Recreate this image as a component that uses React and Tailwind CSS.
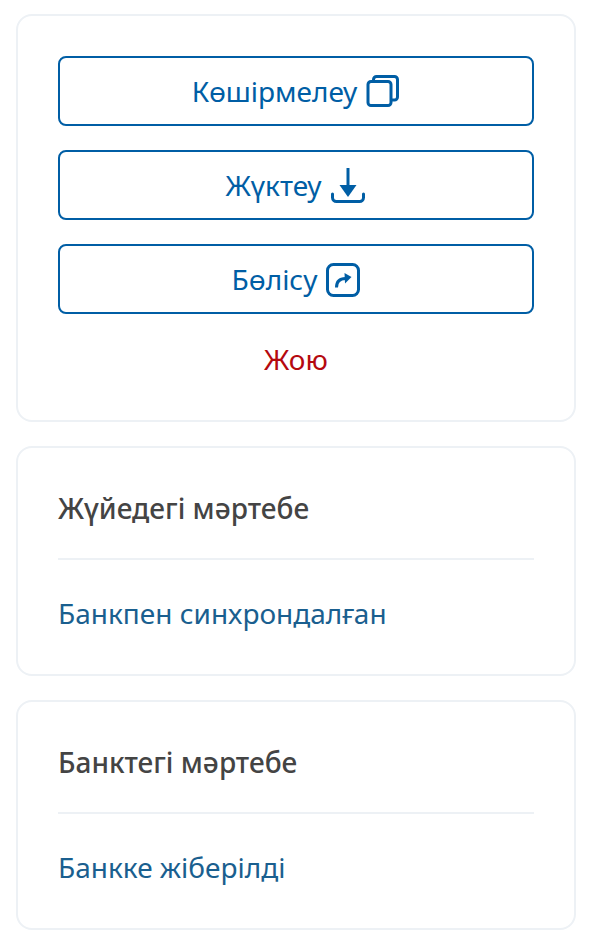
function CopyIcon() {
  return (
    <svg width="34" height="34" viewBox="0 0 34 34" fill="none" stroke="#005ea5" strokeWidth="3" className="translate-y-px">
      <rect x="2" y="6.5" width="23" height="24" rx="3" />
      <path d="M7.5 6V4.5a3 3 0 0 1 3-3h18a3 3 0 0 1 3 3V22a3 3 0 0 1-3 3h-3" />
    </svg>
  );
}

function DownloadIcon() {
  return (
    <svg width="36" height="36" viewBox="0 0 36 36" fill="none" className="-translate-x-px translate-y-px">
      <path d="M18 0v20" stroke="#005ea5" strokeWidth="3" />
      <path d="M9.5 17h17L18 29z" fill="#005ea5" />
      <path d="M2.5 26v3.5a4 4 0 0 0 4 4h23a4 4 0 0 0 4-4V26" stroke="#005ea5" strokeWidth="3" strokeLinecap="round" />
    </svg>
  );
}

function ShareIcon() {
  return (
    <svg width="34" height="34" viewBox="0 0 34 34" fill="none" className="translate-y-px">
      <rect x="1.5" y="1.5" width="31" height="31" rx="6" stroke="#005ea5" strokeWidth="3" />
      <path d="M10.5 24.5c0-6 3-9 9-9" stroke="#005ea5" strokeWidth="3" />
      <path d="M18.5 10 25.5 14 19 20.5z" fill="#005ea5" />
    </svg>
  );
}

function ActionButton({ label, icon }) {
  return (
    <button className="flex h-[70px] w-full items-center justify-center gap-[9px] rounded-lg border-2 border-[#005ea5] bg-white text-[28px] text-[#005ea5]">
      <span>{label}</span>
      {icon}
    </button>
  );
}

function StatusCard({ title, value }) {
  return (
    <section className="rounded-[16px] border-2 border-[#edf1f5] bg-white px-10">
      <h2 className="flex h-[112px] items-center border-b-2 border-[#edf1f5] pt-[10px] text-[28px] font-medium text-[#444444]">{title}</h2>
      <p className="flex h-[114px] items-center pb-2 text-[28px] text-[#1a5f8f]">{value}</p>
    </section>
  );
}

export default function App() {
  return (
    <main
      className="flex min-h-[950px] flex-col gap-6 bg-white pl-4 pr-[14px] pt-[14px]"
      style={{ fontFamily: '"Noto Sans", sans-serif' }}
    >
      <section className="flex flex-col gap-6 rounded-[16px] border-2 border-[#edf1f5] bg-white px-10 pb-10 pt-10">
        <ActionButton label="Көшірмелеу" icon={<CopyIcon />} />
        <ActionButton label="Жүктеу" icon={<DownloadIcon />} />
        <ActionButton label="Бөлісу" icon={<ShareIcon />} />
        <button className="text-[28px] leading-[42px] text-[#b5090f]">Жою</button>
      </section>
      <StatusCard title="Жүйедегі мәртебе" value="Банкпен синхрондалған" />
      <StatusCard title="Банктегі мәртебе" value="Банкке жіберілді" />
    </main>
  );
}
